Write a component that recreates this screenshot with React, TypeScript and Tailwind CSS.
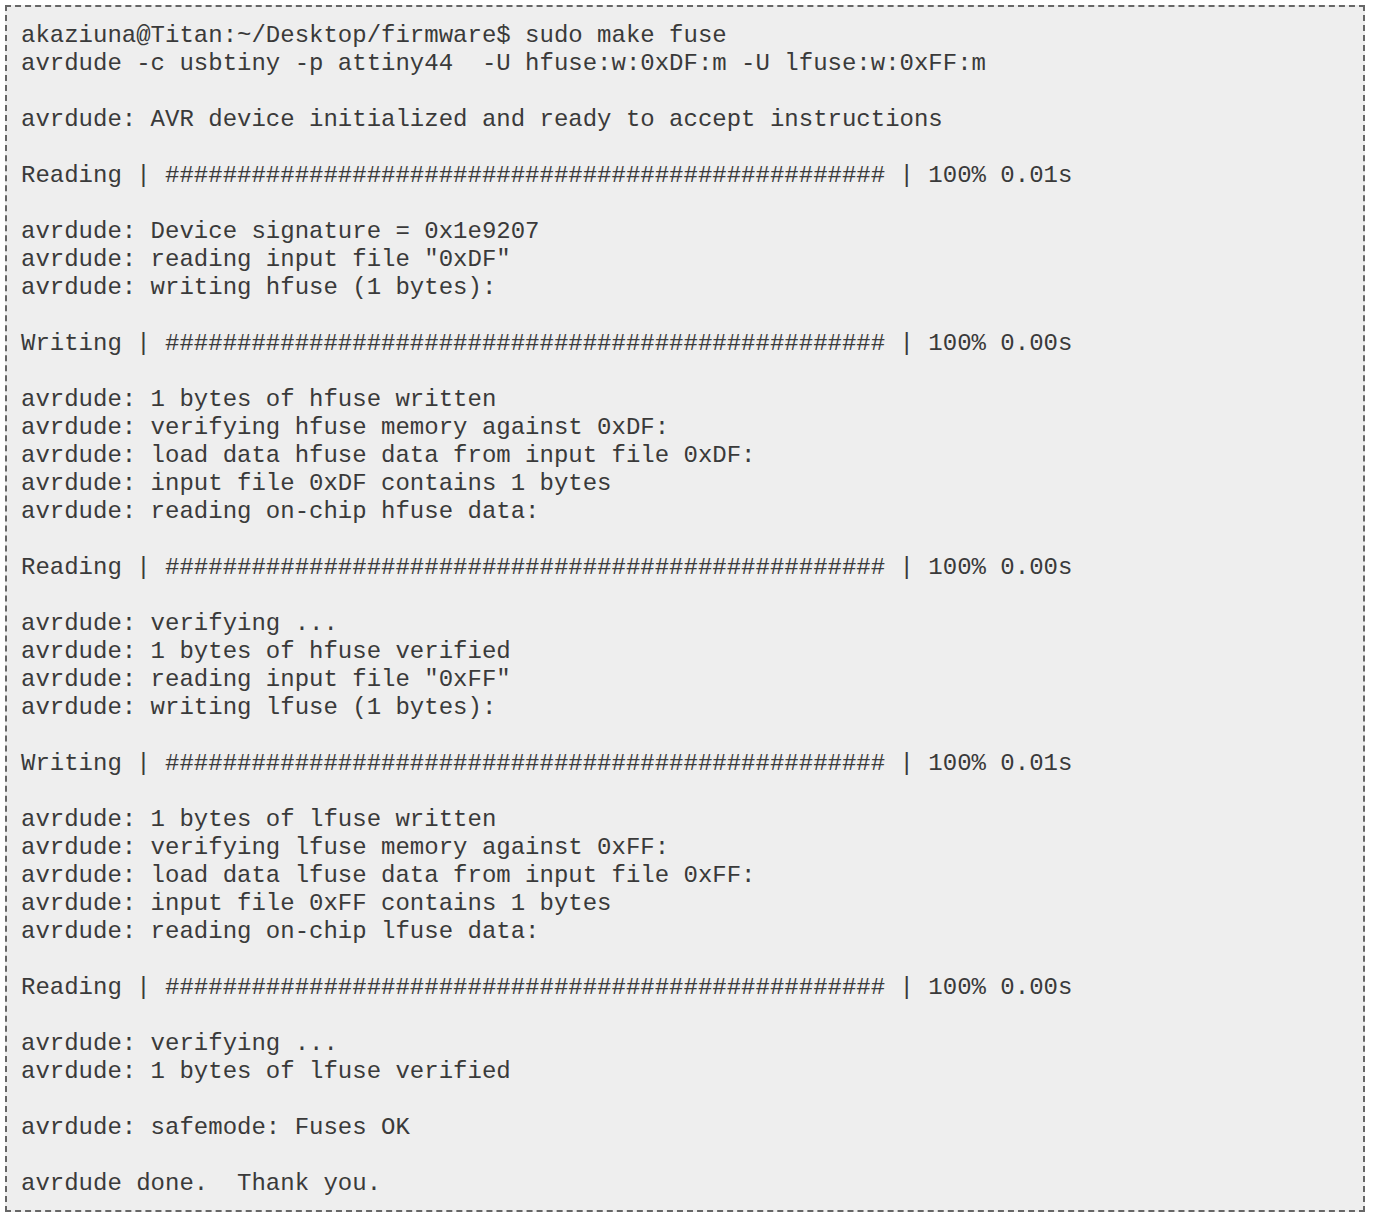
const hashes = "#".repeat(50);

const lines = [
  "akaziuna@Titan:~/Desktop/firmware$ sudo make fuse",
  "avrdude -c usbtiny -p attiny44  -U hfuse:w:0xDF:m -U lfuse:w:0xFF:m",
  "",
  "avrdude: AVR device initialized and ready to accept instructions",
  "",
  `Reading | ${hashes} | 100% 0.01s`,
  "",
  "avrdude: Device signature = 0x1e9207",
  'avrdude: reading input file "0xDF"',
  "avrdude: writing hfuse (1 bytes):",
  "",
  `Writing | ${hashes} | 100% 0.00s`,
  "",
  "avrdude: 1 bytes of hfuse written",
  "avrdude: verifying hfuse memory against 0xDF:",
  "avrdude: load data hfuse data from input file 0xDF:",
  "avrdude: input file 0xDF contains 1 bytes",
  "avrdude: reading on-chip hfuse data:",
  "",
  `Reading | ${hashes} | 100% 0.00s`,
  "",
  "avrdude: verifying ...",
  "avrdude: 1 bytes of hfuse verified",
  'avrdude: reading input file "0xFF"',
  "avrdude: writing lfuse (1 bytes):",
  "",
  `Writing | ${hashes} | 100% 0.01s`,
  "",
  "avrdude: 1 bytes of lfuse written",
  "avrdude: verifying lfuse memory against 0xFF:",
  "avrdude: load data lfuse data from input file 0xFF:",
  "avrdude: input file 0xFF contains 1 bytes",
  "avrdude: reading on-chip lfuse data:",
  "",
  `Reading | ${hashes} | 100% 0.00s`,
  "",
  "avrdude: verifying ...",
  "avrdude: 1 bytes of lfuse verified",
  "",
  "avrdude: safemode: Fuses OK",
  "",
  "avrdude done.  Thank you.",
];

export default function App() {
  return (
    <div className="min-h-screen bg-white p-[5px]">
      <pre
        className="w-[1360px] border-2 border-dashed border-[#666] bg-[#eeeeee] pt-[15px] pb-[12px] pl-[14px] text-[24px] leading-[28px] text-[#3a3a3a]"
        style={{ fontFamily: '"Liberation Mono", "Courier New", monospace' }}
      >
        {lines.join("\n")}
      </pre>
    </div>
  );
}
